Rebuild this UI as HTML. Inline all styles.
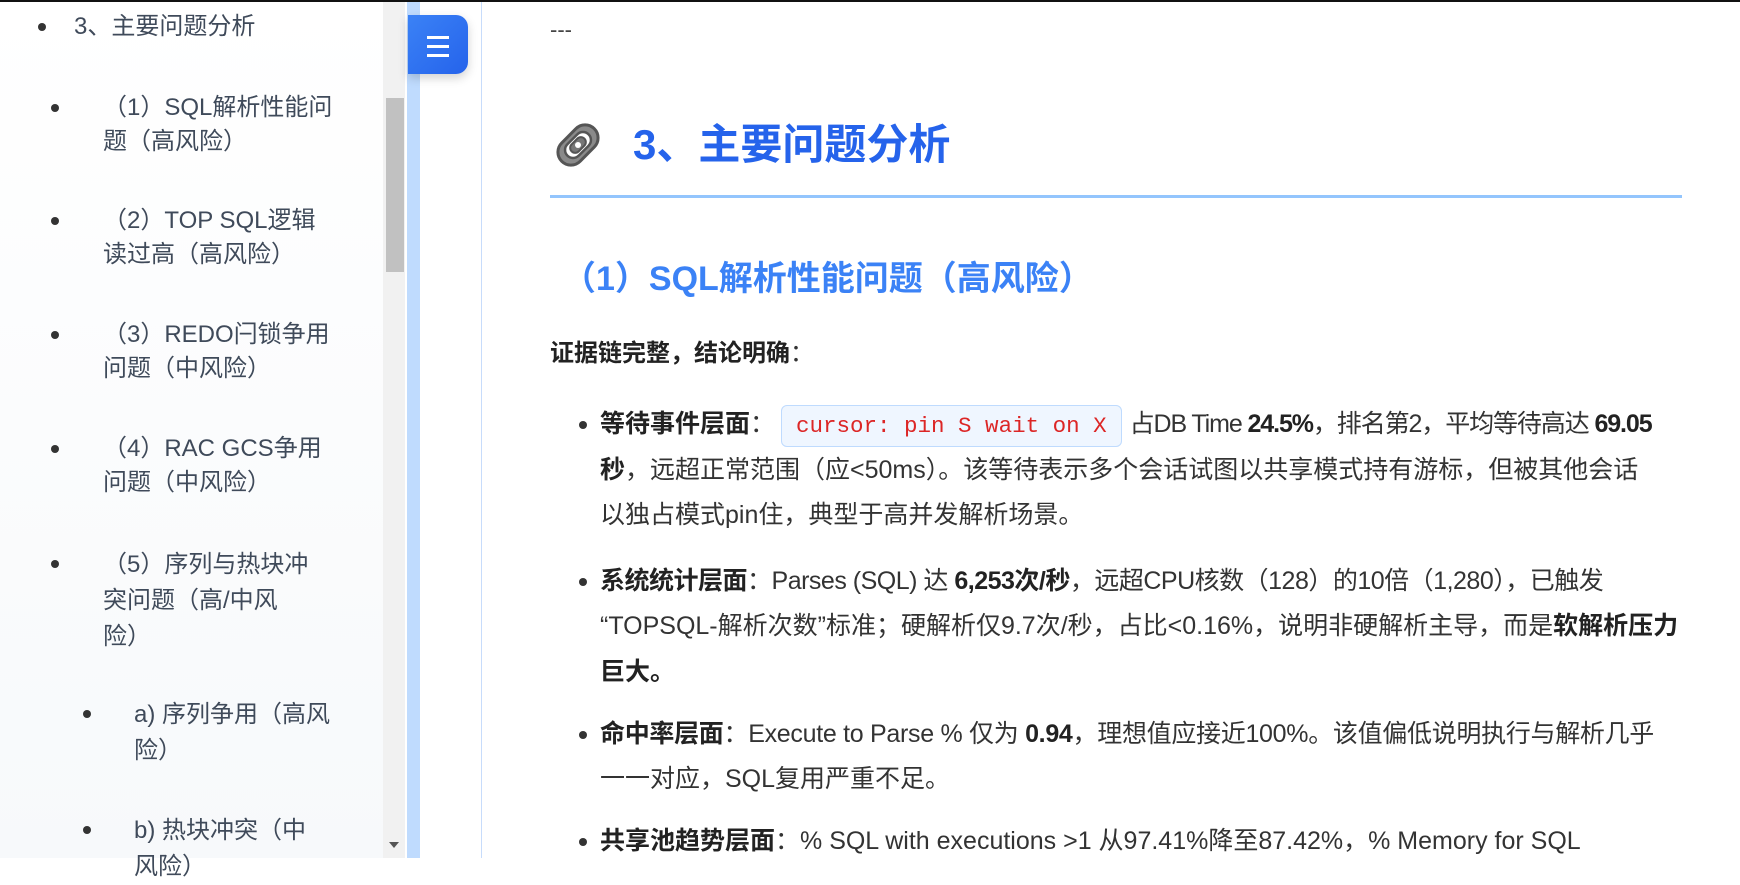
<!DOCTYPE html>
<html><head><meta charset="utf-8"><style>
*{margin:0;padding:0;box-sizing:border-box}
body{width:1740px;height:858px;overflow:hidden;background:#fff;font-family:"Liberation Sans","Noto Sans CJK SC",sans-serif;position:relative}
.topl{position:absolute;left:0;top:0;width:1740px;height:2px;background:#111;z-index:10}
.side{position:absolute;left:0;top:0;width:383px;height:858px;background:linear-gradient(180deg,#fff,#f7f9fb)}
.sb{position:absolute;left:383px;top:0;width:22px;height:858px;background:#f1f1f1}
.thumb{position:absolute;left:386px;top:98px;width:18px;height:174px;background:#c1c1c1}
.strip{position:absolute;left:407px;top:0;width:13px;height:858px;background:#bfdbfe}
.vline{position:absolute;left:481px;top:0;width:1px;height:858px;background:#c7dcfb}
.btn{position:absolute;left:408px;top:15px;width:60px;height:59px;background:linear-gradient(135deg,#3b82f6,#2563eb);border-radius:0 12px 12px 0;box-shadow:0 4px 10px rgba(0,0,0,.18)}
.btn i{position:absolute;left:19px;width:22px;height:3px;background:#fff}
.s{position:absolute;font-size:24px;color:#3f4a5a;line-height:34px;white-space:nowrap}
.dot{position:absolute;width:8px;height:8px;border-radius:50%;background:#333}
.t{position:absolute;left:600px;font-size:25px;line-height:45px;color:#333;white-space:nowrap}
b{font-weight:bold;color:#222}
code{font-family:"Liberation Mono",monospace;color:#dc2626;background:#eff6ff;border:1px solid #bfdbfe;border-radius:6px;padding:7px 14px;font-size:22.5px;margin:0 8px 0 6px}
</style></head><body>
<div class="topl"></div>
<div class="side"></div>
<div class="sb"></div><div class="thumb"></div>
<div style="position:absolute;left:389px;top:842px;width:0;height:0;border-left:5px solid transparent;border-right:5px solid transparent;border-top:6px solid #555"></div>
<div class="strip"></div>
<div class="vline"></div>
<div class="btn"><i style="top:21px"></i><i style="top:30px"></i><i style="top:39px"></i></div>

<div class="dot" style="left:38px;top:23px"></div><div class="s" style="left:74px;top:10px">3、主要问题分析</div>
<div class="dot" style="left:51px;top:104px"></div><div class="s" style="left:103px;top:91px">（1）SQL解析性能问<br>题（高风险）</div>
<div class="dot" style="left:51px;top:217px"></div><div class="s" style="left:103px;top:204px">（2）TOP SQL逻辑<br>读过高（高风险）</div>
<div class="dot" style="left:51px;top:331px"></div><div class="s" style="left:103px;top:318px">（3）REDO闩锁争用<br>问题（中风险）</div>
<div class="dot" style="left:51px;top:445px"></div><div class="s" style="left:103px;top:432px">（4）RAC GCS争用<br>问题（中风险）</div>
<div class="dot" style="left:51px;top:560px"></div><div class="s" style="left:103px;top:547px;line-height:36px">（5）序列与热块冲<br>突问题（高/中风<br>险）</div>
<div class="dot" style="left:83px;top:710px"></div><div class="s" style="left:134px;top:697px;line-height:36px">a) 序列争用（高风<br>险）</div>
<div class="dot" style="left:83px;top:826px"></div><div class="s" style="left:134px;top:813px;line-height:36px">b) 热块冲突（中<br>风险）</div>

<div style="position:absolute;left:550px;top:17px;font-size:22px;color:#444">---</div>
<svg style="position:absolute;left:553px;top:120px" width="50" height="50" viewBox="0 0 50 50">
<g transform="rotate(-45 25 25)">
<rect x="2" y="12" width="46" height="26" rx="13" fill="#8a8a8a" stroke="#555" stroke-width="3"/>
<rect x="10" y="17" width="30" height="16" rx="8" fill="#fff" stroke="#555" stroke-width="2.5"/>
<rect x="16" y="20" width="18" height="10" rx="5" fill="#777" stroke="#555" stroke-width="2"/>
<circle cx="25" cy="25" r="3" fill="#fff"/>
</g></svg>
<div style="position:absolute;left:633px;top:119px;font-size:42px;line-height:52px;font-weight:bold;color:#2563eb">3、主要问题分析</div>
<div style="position:absolute;left:550px;top:195px;width:1132px;height:3px;background:#93c5fd"></div>
<div style="position:absolute;left:562px;top:257px;font-size:34px;line-height:44px;font-weight:bold;color:#3b82f6">（1）SQL解析性能问题（高风险）</div>
<div style="position:absolute;left:550px;top:331px;font-size:24px;line-height:45px;color:#333"><b>证据链完整，结论明确</b>：</div>

<div class="dot" style="left:579px;top:421px"></div>
<div class="t" style="top:402px"><b>等待事件层面</b>：<code>cursor: pin S wait on X</code><span style="letter-spacing:-1.1px">占DB Time <b>24.5%</b>，排名第2，平均等待高达 <b>69.05</b></span></div>
<div class="t" style="top:448px"><b>秒</b>，远超正常范围（应&lt;50ms）。该等待表示多个会话试图以共享模式持有游标，但被其他会话</div>
<div class="t" style="top:493px">以独占模式pin住，典型于高并发解析场景。</div>

<div class="dot" style="left:579px;top:578px"></div>
<div class="t" style="top:559px;letter-spacing:-0.5px"><b>系统统计层面</b>：Parses (SQL) 达 <b>6,253次/秒</b>，远超CPU核数（128）的10倍（1,280），已触发</div>
<div class="t" style="top:604px">“TOPSQL-解析次数”标准；硬解析仅9.7次/秒，占比&lt;0.16%，说明非硬解析主导，而是<b>软解析压力</b></div>
<div class="t" style="top:650px"><b>巨大。</b></div>

<div class="dot" style="left:579px;top:731px"></div>
<div class="t" style="top:712px;letter-spacing:-0.3px"><b>命中率层面</b>：Execute to Parse % 仅为 <b>0.94</b>，理想值应接近100%。该值偏低说明执行与解析几乎</div>
<div class="t" style="top:757px">一一对应，SQL复用严重不足。</div>

<div class="dot" style="left:579px;top:838px"></div>
<div class="t" style="top:819px"><b>共享池趋势层面</b>：% SQL with executions &gt;1 从97.41%降至87.42%，% Memory for SQL</div>
</body></html>
